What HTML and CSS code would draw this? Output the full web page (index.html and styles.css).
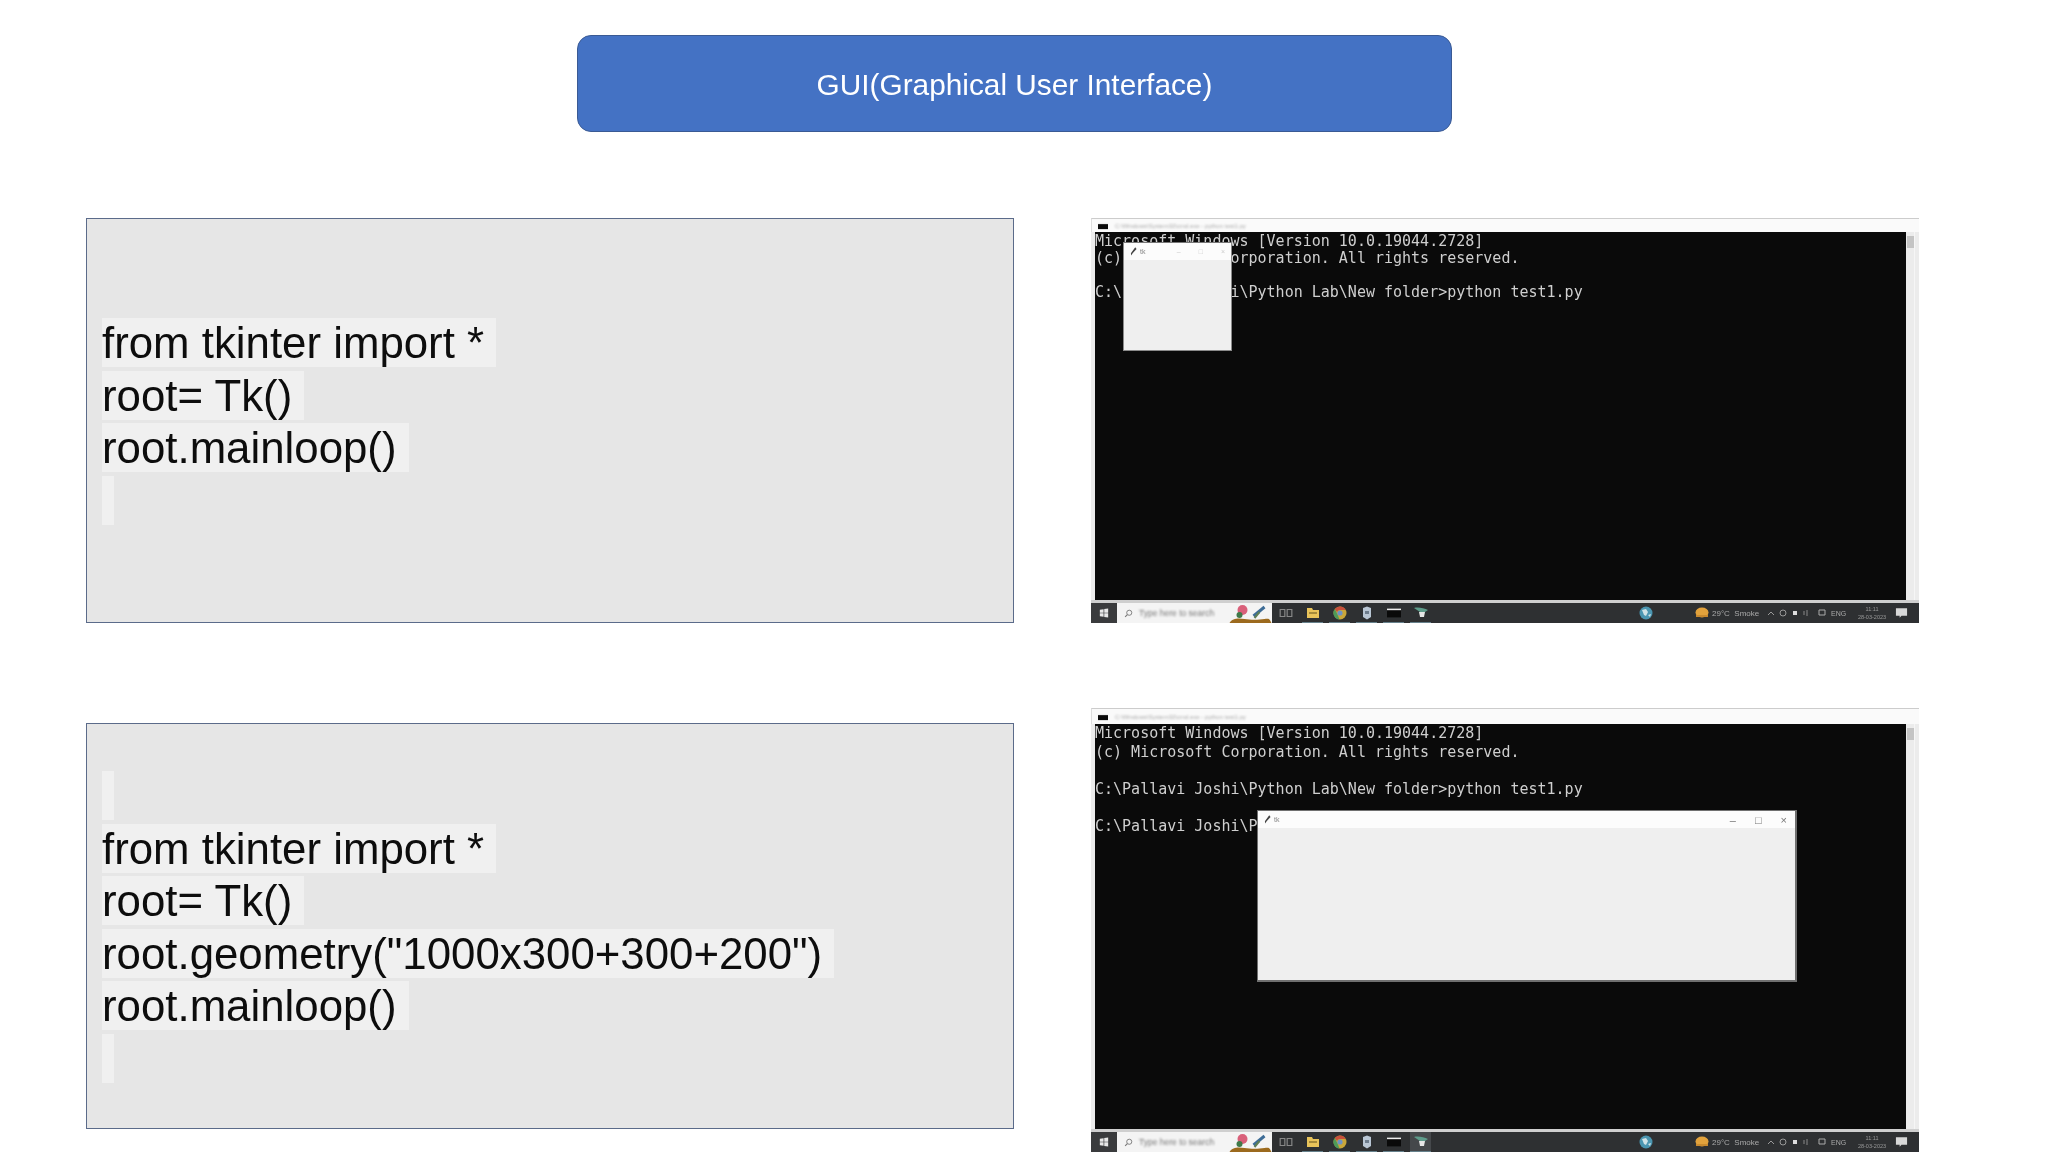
FILE: index.html
```html
<!DOCTYPE html>
<html lang="en">
<head>
<meta charset="utf-8">
<title>GUI(Graphical User Interface)</title>
<link rel="stylesheet" href="styles.css">
</head>
<body>
<svg class="sprites" xmlns="http://www.w3.org/2000/svg">
  <symbol id="start" viewBox="0 0 12 12"><path fill="#e8e8e8" d="M1 2l4.500-.6V5.600H1zM6.300 1.300L11 .7v4.900H6.300zM1 6.400h4.500v4.200L1 10zM6.300 6.400H11v4.900l-4.700-.6z"/></symbol>
  <symbol id="lens" viewBox="0 0 12 12"><circle cx="7" cy="5" r="3.400" fill="none" stroke="#777" stroke-width="1.200"/><path d="M4.500 7.500L1.500 10.500" stroke="#777" stroke-width="1.400"/></symbol>
  <symbol id="doodle" viewBox="0 0 42 19"><path fill="#9c6a1e" d="M0 19c3-5 9-5 15-4s14 1 20 0 5 1 7 4z"/><circle cx="13" cy="6" r="5" fill="#d9607a"/><circle cx="10" cy="11" r="3" fill="#3f7a4a"/><path d="M24 12L35 3" stroke="#3d6c96" stroke-width="3"/><path d="M25 14l5-6" stroke="#5f7f55" stroke-width="2"/></symbol>
  <symbol id="taskview" viewBox="0 0 12 12"><path fill="none" stroke="#888" d="M1 3h4v6H1zM7 3h4v6H7z"/></symbol>
  <symbol id="folder" viewBox="0 0 14 12"><path fill="#e8c35a" d="M1 1h5l1 2h6v8H1z"/><path fill="#a58a3a" d="M3 5h8v2H3z"/></symbol>
  <symbol id="chrome" viewBox="0 0 14 14"><circle cx="7" cy="7" r="6.500" fill="#c9a63a"/><path fill="#c8503c" d="M7 .5a6.500 6.500 0 0 1 5.700 3.400H7a3 3 0 0 0-3 2L1.800 3A6.500 6.500 0 0 1 7 .5z"/><path fill="#4e9a58" d="M1.800 3L4.500 8.500l2 5A6.500 6.500 0 0 1 1.800 3z"/><circle cx="7" cy="7" r="2.600" fill="#6f93c4"/></symbol>
  <symbol id="edge" viewBox="0 0 12 14"><path fill="#b9c6d4" d="M2 2l4-1.500L10 2v9l-4 2.500L2 11z"/><path fill="#6d7c8c" d="M4 5h4v3H4z"/></symbol>
  <symbol id="cmd" viewBox="0 0 16 12"><path fill="#eee" d="M0 1h16v2H0z"/><path fill="#0a0a0a" d="M0 3h16v8H0z"/></symbol>
  <symbol id="snake" viewBox="0 0 14 12"><path fill="#5e9c8b" d="M0 1c4-1 10 0 14 2l-3 2H6z"/><path fill="#e6e6e6" d="M5 5h6l-1 5H6z"/></symbol>
  <symbol id="globe" viewBox="0 0 14 14"><circle cx="7" cy="7" r="6.500" fill="#4a95b0"/><path fill="#cfe2e6" d="M3 4l4-1 2 3-2 4-2-1zM9 9l3-1-1 3z"/></symbol>
  <symbol id="sun" viewBox="0 0 14 12"><ellipse cx="7" cy="5.500" rx="6.500" ry="5" fill="#e2a23c"/><path fill="#c98a2e" d="M1 8h12v2H1z"/></symbol>
  <symbol id="tray" viewBox="0 0 60 10"><path d="M1 7l3-3 3 3" fill="none" stroke="#999"/><circle cx="16" cy="5" r="3" fill="none" stroke="#999"/><path fill="#ddd" d="M26 3h4v4h-4z"/><path d="M37 3v4M40 2v6" stroke="#888"/><path d="M52 2h6v5h-6z" fill="none" stroke="#aaa"/></symbol>
  <symbol id="notify" viewBox="0 0 14 12"><path fill="#d8d8d8" d="M1 1h12v8H7l-2 2V9H1z"/></symbol>
  <symbol id="feather" viewBox="0 0 8 10"><path fill="#444" d="M6 0L7.500 2 3 7 1.500 9.500 1 7z"/></symbol>
</svg>

<main class="slide">
  <header class="banner"><span class="banner-text">GUI(Graphical User Interface)</span></header>

  <section class="row row-first">
    <div class="code-box">
      <div class="code-line"><span class="code-mark">from tkinter import * </span></div>
      <div class="code-line"><span class="code-mark">root= Tk() </span></div>
      <div class="code-line"><span class="code-mark">root.mainloop() </span></div>
      <div class="code-line"><span class="code-mark"> </span></div>
    </div>

    <div class="screen screen-short">
      <div class="titlebar">
        <svg class="tb-icon"><use href="#cmd"/></svg>
        <span class="tb-text">C:\Windows\System32\cmd.exe - python  test1.py</span>
      </div>
      <div class="screen-mid">
        <div class="console">
          <pre class="console-text">Microsoft Windows [Version 10.0.19044.2728]
(c) Microsoft Corporation. All rights reserved.

C:\Pallavi Joshi\Python Lab\New folder&gt;python test1.py</pre>
          <div class="tk-window tk-small">
            <div class="tk-title">
              <svg class="tk-feather"><use href="#feather"/></svg>
              <span class="tk-name">tk</span>
              <span class="tk-controls"><span>–</span><span>□</span><span>×</span></span>
            </div>
          </div>
        </div>
        <div class="scrollbar"></div>
      </div>
      <div class="taskbar">
        <span class="start"><svg class="ico-start"><use href="#start"/></svg></span>
        <span class="search">
          <svg class="ico-lens"><use href="#lens"/></svg>
          <span class="search-text">Type here to search</span>
          <svg class="ico-doodle"><use href="#doodle"/></svg>
        </span>
        <span class="apps">
          <span class="app-slot app-plain"><svg class="ico-app"><use href="#taskview"/></svg></span>
          <span class="app-slot"><svg class="ico-app"><use href="#folder"/></svg></span>
          <span class="app-slot"><svg class="ico-app"><use href="#chrome"/></svg></span>
          <span class="app-slot"><svg class="ico-app"><use href="#edge"/></svg></span>
          <span class="app-slot"><svg class="ico-app"><use href="#cmd"/></svg></span>
          <span class="app-slot"><svg class="ico-app"><use href="#snake"/></svg></span>
        </span>
        <span class="tray">
          <svg class="ico-app"><use href="#globe"/></svg>
          <svg class="ico-sun"><use href="#sun"/></svg>
          <span class="weather">29°C  Smoke</span>
          <svg class="ico-tray"><use href="#tray"/></svg>
          <span class="lang">ENG</span>
          <span class="clock">11:11<br>28-03-2023</span>
          <svg class="ico-notify"><use href="#notify"/></svg>
        </span>
      </div>
    </div>
  </section>

  <section class="row row-second">
    <div class="code-box code-box-low">
      <div class="code-line"><span class="code-mark"> </span></div>
      <div class="code-line"><span class="code-mark">from tkinter import * </span></div>
      <div class="code-line"><span class="code-mark">root= Tk() </span></div>
      <div class="code-line"><span class="code-mark">root.geometry("1000x300+300+200") </span></div>
      <div class="code-line"><span class="code-mark">root.mainloop() </span></div>
      <div class="code-line"><span class="code-mark"> </span></div>
    </div>

    <div class="screen screen-tall">
      <div class="titlebar">
        <svg class="tb-icon"><use href="#cmd"/></svg>
        <span class="tb-text">C:\Windows\System32\cmd.exe - python  test1.py</span>
      </div>
      <div class="screen-mid">
        <div class="console">
          <pre class="console-text">Microsoft Windows [Version 10.0.19044.2728]
(c) Microsoft Corporation. All rights reserved.

C:\Pallavi Joshi\Python Lab\New folder&gt;python test1.py

C:\Pallavi Joshi\Python Lab\New folder&gt;</pre>
          <div class="tk-window tk-wide">
            <div class="tk-title">
              <svg class="tk-feather"><use href="#feather"/></svg>
              <span class="tk-name">tk</span>
              <span class="tk-controls tk-controls-wide"><span>–</span><span>□</span><span>×</span></span>
            </div>
          </div>
        </div>
        <div class="scrollbar"></div>
      </div>
      <div class="taskbar">
        <span class="start"><svg class="ico-start"><use href="#start"/></svg></span>
        <span class="search">
          <svg class="ico-lens"><use href="#lens"/></svg>
          <span class="search-text">Type here to search</span>
          <svg class="ico-doodle"><use href="#doodle"/></svg>
        </span>
        <span class="apps">
          <span class="app-slot app-plain"><svg class="ico-app"><use href="#taskview"/></svg></span>
          <span class="app-slot"><svg class="ico-app"><use href="#folder"/></svg></span>
          <span class="app-slot"><svg class="ico-app"><use href="#chrome"/></svg></span>
          <span class="app-slot"><svg class="ico-app"><use href="#edge"/></svg></span>
          <span class="app-slot"><svg class="ico-app"><use href="#cmd"/></svg></span>
          <span class="app-slot app-active"><svg class="ico-app"><use href="#snake"/></svg></span>
        </span>
        <span class="tray">
          <svg class="ico-app"><use href="#globe"/></svg>
          <svg class="ico-sun"><use href="#sun"/></svg>
          <span class="weather">29°C  Smoke</span>
          <svg class="ico-tray"><use href="#tray"/></svg>
          <span class="lang">ENG</span>
          <span class="clock">11:11<br>28-03-2023</span>
          <svg class="ico-notify"><use href="#notify"/></svg>
        </span>
      </div>
    </div>
  </section>
</main>
</body>
</html>
```
FILE: styles.css
```css
* { box-sizing: border-box; }
html, body { margin: 0; padding: 0; background: #fff; }
body { width: 2048px; height: 1152px; overflow: hidden; font-family: "Liberation Sans", Arial, sans-serif; }
.sprites { display: none; }

.slide { display: flex; flex-direction: column; padding: 35px 0 0 86px; height: 1152px; }

.banner {
  width: 875px; height: 97px; margin-left: 491px;
  display: flex; align-items: center; justify-content: center;
  padding-top: 2px;
  background: #4472c4; border: 1px solid #3a5a94; border-radius: 14px;
  color: #fff; font-size: 29.800px;
}
.banner-text { filter: blur(.3px); }

.row { display: flex; align-items: flex-start; gap: 77px; }
.row-first { margin-top: 86px; }
.row-second { margin-top: 85px; }

.code-box {
  width: 928px; height: 405px;
  display: flex; flex-direction: column; justify-content: center;
  padding: 2px 0 0 15px;
  background: #e6e6e6; border: 1px solid #5b6b8a;
  color: #0d0d0d; font-size: 43.800px;
}
.code-box-low { margin-top: 15px; height: 406px; }
.code-line { height: 52.600px; display: flex; align-items: center; }
.code-mark { display: block; height: 49px; line-height: 49px; background: #f0f0f0; white-space: pre; filter: blur(.35px); }

.screen { width: 828px; display: flex; flex-direction: column; background: #fff; overflow: hidden; }
.screen-short { height: 405px; }
.screen-tall { height: 444px; }

.titlebar {
  display: flex; align-items: center; gap: 7px; padding-left: 6px;
  height: 14px; border-top: 1px solid #ccc; border-left: 1px solid #ddd; background: #fafafa; flex: none;
}
.screen-tall .titlebar { height: 16px; }
.tb-icon { width: 10px; height: 8px; filter: blur(.4px); }
.tb-text { font-size: 6px; color: #aaa; filter: blur(.8px); white-space: nowrap; }

.screen-mid {
  flex: 1; min-height: 0; display: flex;
  padding-left: 4px; background: #ececec; border-bottom: 3px solid #cfcfcf;
}
.console { position: relative; width: 811px; background: #0a0a0a; overflow: hidden; }
.console-text {
  margin: 0; padding: 1px 0 0 0;
  font-family: "DejaVu Sans Mono", "Liberation Mono", monospace; font-size: 15px; line-height: 17px;
  color: #cfcfcf; filter: blur(.7px);
}
.screen-tall .console-text { padding-top: 0; line-height: 18.500px; }
.scrollbar { position: relative; width: 9px; background: #ececec; border-right: 1px solid #f6f6f6; }
.scrollbar::before { content: ""; position: absolute; left: 1px; right: 0; top: 4px; height: 12px; background: #c4c4c4; filter: blur(.5px); }

.tk-window { position: absolute; background: #efefef; border: 1px solid #8a8a8a; border-top-color: #777; }
.tk-small { left: 28px; top: 10px; width: 109px; height: 109px; }
.tk-wide { left: 162px; top: 86px; width: 540px; height: 172px; border-width: 1px 2px 2px 1px; border-color: #707070; }
.tk-title { display: flex; align-items: center; gap: 3px; height: 17px; padding-left: 6px; background: #fcfcfc; font-size: 7px; color: #888; }
.tk-feather { width: 7px; height: 9px; filter: blur(.4px); }
.tk-name { filter: blur(.5px); }
.tk-controls { margin-left: auto; display: flex; gap: 18px; padding-right: 6px; color: #ccc; filter: blur(.5px); }
.tk-controls-wide { gap: 19px; font-size: 11px; color: #777; padding-right: 8px; }

.taskbar {
  flex: none; height: 20px; display: flex; align-items: stretch;
  background: #2e3032; color: #aaa; font-size: 7px;
}
.start { width: 26px; display: flex; align-items: center; justify-content: center; background: #3a3b3d; }
.ico-start { width: 10px; height: 10px; filter: blur(.5px); }
.search { width: 155px; display: flex; align-items: center; background: #f4f4f4; padding-left: 7px; }
.ico-lens { width: 9px; height: 9px; filter: blur(.4px); }
.search-text { margin-left: 6px; color: #777; font-size: 8.500px; filter: blur(.8px); white-space: nowrap; }
.ico-doodle { margin-left: auto; width: 43px; height: 19px; align-self: flex-end; filter: blur(.5px); }
.apps { display: flex; }
.app-slot { width: 21px; margin: 0 3px; display: flex; align-items: center; justify-content: center; border-bottom: 1px solid #66818c; }
.app-plain { border-bottom-color: transparent; }
.app-active { background: #45484b; }
.ico-app { width: 14px; height: 14px; filter: blur(.5px); }
.tray { margin-left: auto; display: flex; align-items: center; padding-right: 11px; filter: blur(.6px); }
.ico-sun { width: 14px; height: 12px; margin-left: 42px; }
.weather { margin-left: 3px; width: 50px; font-size: 8px; white-space: pre; }
.ico-tray { width: 60px; height: 10px; margin-left: 5px; }
.lang { margin-left: 4px; width: 16px; font-size: 7px; }
.clock { margin-left: 7px; width: 36px; text-align: center; font-size: 5.500px; line-height: 8px; color: #999; }
.ico-notify { width: 13px; height: 12px; margin-left: 5px; }
```
